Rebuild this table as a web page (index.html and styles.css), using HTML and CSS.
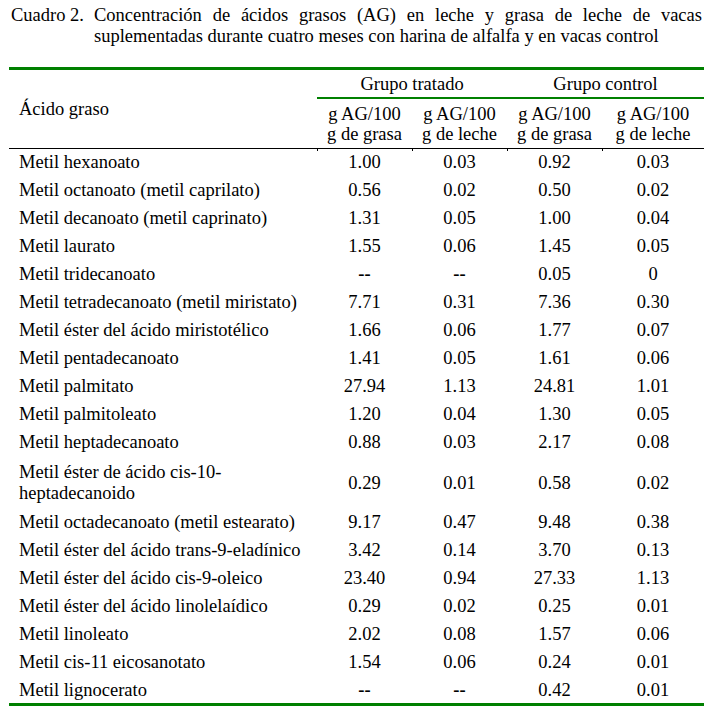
FILE: index.html
```html
<!DOCTYPE html>
<html lang="es">
<head>
<meta charset="utf-8">
<title>Cuadro 2</title>
<link rel="stylesheet" href="styles.css">
</head>
<body>
<div class="page">
  <div class="caption">
    <span class="caption-label">Cuadro 2.</span>
    <p class="caption-text">Concentración de ácidos grasos (AG) en leche y grasa de leche de vacas suplementadas durante cuatro meses con harina de alfalfa y en vacas control</p>
  </div>
  <table class="data">
    <colgroup>
      <col class="c-name">
      <col class="c-val">
      <col class="c-val">
      <col class="c-val">
      <col class="c-last">
    </colgroup>
    <thead>
      <tr class="h1">
        <th class="name" rowspan="2">Ácido graso</th>
        <th class="group" colspan="2">Grupo tratado</th>
        <th class="group" colspan="2">Grupo control</th>
      </tr>
      <tr class="h2">
        <th>g AG/100<br>g de grasa</th>
        <th>g AG/100<br>g de leche</th>
        <th>g AG/100<br>g de grasa</th>
        <th>g AG/100<br>g de leche</th>
      </tr>
    </thead>
    <tbody>
      <tr class="first"><td>Metil hexanoato</td><td>1.00</td><td>0.03</td><td>0.92</td><td>0.03</td></tr>
      <tr><td>Metil octanoato (metil caprilato)</td><td>0.56</td><td>0.02</td><td>0.50</td><td>0.02</td></tr>
      <tr><td>Metil decanoato (metil caprinato)</td><td>1.31</td><td>0.05</td><td>1.00</td><td>0.04</td></tr>
      <tr><td>Metil laurato</td><td>1.55</td><td>0.06</td><td>1.45</td><td>0.05</td></tr>
      <tr><td>Metil tridecanoato</td><td class="dash">--</td><td class="dash">--</td><td>0.05</td><td>0</td></tr>
      <tr><td>Metil tetradecanoato (metil miristato)</td><td>7.71</td><td>0.31</td><td>7.36</td><td>0.30</td></tr>
      <tr><td>Metil éster del ácido miristotélico</td><td>1.66</td><td>0.06</td><td>1.77</td><td>0.07</td></tr>
      <tr><td>Metil pentadecanoato</td><td>1.41</td><td>0.05</td><td>1.61</td><td>0.06</td></tr>
      <tr><td>Metil palmitato</td><td>27.94</td><td>1.13</td><td>24.81</td><td>1.01</td></tr>
      <tr><td>Metil palmitoleato</td><td>1.20</td><td>0.04</td><td>1.30</td><td>0.05</td></tr>
      <tr><td>Metil heptadecanoato</td><td>0.88</td><td>0.03</td><td>2.17</td><td>0.08</td></tr>
      <tr class="double"><td>Metil éster de ácido cis-10-<br>heptadecanoido</td><td>0.29</td><td>0.01</td><td>0.58</td><td>0.02</td></tr>
      <tr><td>Metil octadecanoato (metil estearato)</td><td>9.17</td><td>0.47</td><td>9.48</td><td>0.38</td></tr>
      <tr><td>Metil éster del ácido trans-9-eladínico</td><td>3.42</td><td>0.14</td><td>3.70</td><td>0.13</td></tr>
      <tr><td>Metil éster del ácido cis-9-oleico</td><td>23.40</td><td>0.94</td><td>27.33</td><td>1.13</td></tr>
      <tr><td>Metil éster del ácido linolelaídico</td><td>0.29</td><td>0.02</td><td>0.25</td><td>0.01</td></tr>
      <tr><td>Metil linoleato</td><td>2.02</td><td>0.08</td><td>1.57</td><td>0.06</td></tr>
      <tr><td>Metil cis-11 eicosanotato</td><td>1.54</td><td>0.06</td><td>0.24</td><td>0.01</td></tr>
      <tr class="last"><td>Metil lignocerato</td><td class="dash">--</td><td class="dash">--</td><td>0.42</td><td>0.01</td></tr>
    </tbody>
  </table>
</div>
</body>
</html>
```
FILE: styles.css
```css
html, body {
  margin: 0;
  padding: 0;
  background: #ffffff;
}

body {
  font-family: "Liberation Serif", "Times New Roman", serif;
  font-size: 18.5px;
  line-height: 21px;
  color: #000000;
}

.page {
  width: 695px;
  padding: 5px 0 0 9px;
}

.caption {
  display: flex;
  align-items: flex-start;
  padding-left: 2px;
  width: 691px;
}

.caption-label {
  width: 83px;
  flex: none;
  white-space: nowrap;
}

.caption-text {
  margin: 0;
  flex: 1;
  text-align: justify;
}

.data {
  margin-top: 20px;
  width: 695px;
  table-layout: fixed;
  border-collapse: collapse;
  border-spacing: 0;
}

.c-name { width: 308px; }
.c-val { width: 95px; }
.c-last { width: 102px; }

.data th {
  font-weight: normal;
}

.data thead {
  border-top: 3px solid #008000;
}

.h1 th {
  padding: 4px 0 2px 0;
  text-align: center;
}

.h1 th.name {
  text-align: left;
  padding: 0 0 0 10px;
  vertical-align: middle;
  border-bottom: 1px solid #000000;
}

.h1 th.group {
  border-bottom: 2px solid #008000;
}

.h2 th {
  padding: 5px 0 4px 0;
  line-height: 20px;
  text-align: center;
  border-bottom: 1px solid #000000;
}

.data td {
  padding: 3px 0 4px 0;
  text-align: center;
  white-space: nowrap;
}

.data td:first-child {
  text-align: left;
  padding-left: 10px;
}

.data td.dash {
  font-weight: bold;
}

.first td {
  position: relative;
}

.first td + td::before {
  content: "";
  position: absolute;
  left: 0;
  top: 0;
  width: 1px;
  height: 2px;
  background: #000000;
}

.double td {
  padding-top: 5px;
  padding-bottom: 5px;
  vertical-align: middle;
}

.last td {
  padding-bottom: 2px;
  border-bottom: 3px solid #008000;
}
```
